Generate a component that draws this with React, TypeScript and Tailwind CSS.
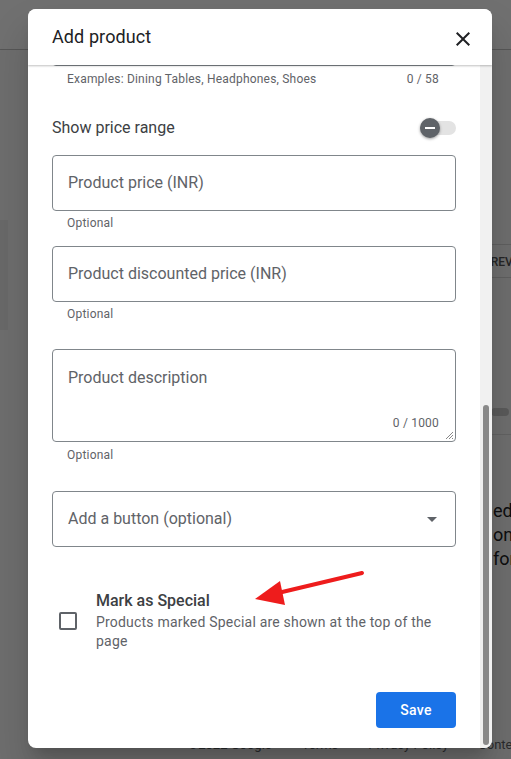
import React from 'react';

const font = { fontFamily: 'Roboto, "Liberation Sans", sans-serif' };

function OutlinedField({ label, className = '' }: { label: string; className?: string }) {
  return (
    <div className={`h-[56px] border border-[#80868b] rounded-[4px] flex items-center px-[15px] ${className}`}>
      <span className="text-[16px] text-[#5f6368]">{label}</span>
    </div>
  );
}

function Helper({ text, className = '' }: { text: string; className?: string }) {
  return <div className={`pl-[15px] text-[12px] leading-[16px] text-[#5f6368] tracking-[0.2px] ${className}`}>{text}</div>;
}

function BackgroundPage() {
  return (
    <div className="h-full bg-[#fafafa] flex flex-col">
      <div className="h-[50px] bg-white border-b border-[#c4c4c4] shrink-0" />
      <div className="flex-1 flex">
        <div className="w-[8px] mt-[170px] h-[110px] bg-[#f0f0f0]" />
        <div className="flex-1" />
        <div className="w-[40px] flex flex-col overflow-hidden">
          <div className="mt-[194px] border-t border-[#d8d8d8]" />
          <div className="pl-[12px] pt-[8px] pb-[6px] text-[12px] text-[#555] font-medium whitespace-nowrap">PREVIEW</div>
          <div className="border-t border-[#d8d8d8]" />
          <div className="mt-[130px] ml-[20px] h-[8px] w-[18px] rounded-full bg-[#ccc]" />
          <div className="mt-[18px] border-t border-[#e0e0e0]" />
          <div className="mt-[64px] pl-[22px] text-[18px] leading-[24px] text-[#202124] whitespace-nowrap">
            <div>ed</div>
            <div>ont</div>
            <div>for</div>
          </div>
        </div>
      </div>
      <div className="h-[24px] shrink-0 flex gap-[30px] pl-[188px] text-[13px] text-[#5f6368] whitespace-nowrap overflow-hidden">
        <span>©2022 Google</span>
        <span>Terms</span>
        <span>Privacy Policy</span>
        <span>Content Policy</span>
      </div>
    </div>
  );
}

export default function App() {
  return (
    <div className="relative w-[511px] h-[759px] overflow-hidden" style={font}>
      <BackgroundPage />
      <div className="absolute inset-0 bg-[rgba(0,0,0,0.56)]" />

      <div className="absolute left-[28px] top-[9px] w-[464px] h-[739px] bg-white rounded-[8px] shadow-[0_11px_15px_-7px_rgba(0,0,0,0.2),0_24px_38px_3px_rgba(0,0,0,0.14)] flex flex-col overflow-hidden">
        <div className="relative z-10 h-[56px] shrink-0 flex items-center justify-between pl-[24px] pr-[17px] bg-white shadow-[0_1px_2px_rgba(0,0,0,0.25)]">
          <span className="text-[18px] text-[#202124] tracking-[0.1px] -mt-[2px]">Add product</span>
          <svg width="24" height="24" viewBox="0 0 24 24" className="mt-[4px]">
            <path fill="#202124" d="M19 6.41L17.59 5 12 10.59 6.41 5 5 6.41 10.59 12 5 17.59 6.41 19 12 13.41 17.59 19 19 17.59 13.41 12z" />
          </svg>
        </div>

        <div className="flex-1 flex min-h-0">
          <div className="flex-1 overflow-hidden pl-[24px] pr-[24px]">
            {/* previous field, scrolled off */}
            <div className="-mt-[55px] h-[56px] border border-[#80868b] rounded-[4px]" />
            <div className="mt-[5px] flex justify-between pl-[15px] pr-[17px] text-[12px] leading-[16px] text-[#5f6368] tracking-[0.2px]">
              <span>Examples: Dining Tables, Headphones, Shoes</span>
              <span>0 / 58</span>
            </div>

            <div className="mt-[29px] flex items-center justify-between h-[24px]">
              <span className="text-[16px] text-[#3c4043]">Show price range</span>
              <div className="relative w-[36px] h-[14px] rounded-full bg-[#e3e3e3]">
                <div className="absolute left-0 -top-[3px] w-[20px] h-[20px] rounded-full bg-[#5f6368] shadow-[0_1px_3px_rgba(0,0,0,0.4)] flex items-center justify-center">
                  <div className="w-[10px] h-[2px] bg-white" />
                </div>
              </div>
            </div>

            <OutlinedField label="Product price (INR)" className="mt-[15px]" />
            <Helper text="Optional" className="mt-[4px]" />

            <OutlinedField label="Product discounted price (INR)" className="mt-[15px]" />
            <Helper text="Optional" className="mt-[4px]" />

            <div className="relative mt-[27px] h-[93px] border border-[#80868b] rounded-[4px] px-[15px] pt-[16px]">
              <span className="text-[16px] text-[#5f6368]">Product description</span>
              <span className="absolute right-[16px] bottom-[9px] text-[12px] text-[#5f6368] tracking-[0.2px]">0 / 1000</span>
              <svg width="9" height="9" viewBox="0 0 9 9" className="absolute right-[1px] bottom-[1px]">
                <path d="M8 1L1 8M8 4L4 8M8 7L7 8" stroke="#888" strokeWidth="1" />
              </svg>
            </div>
            <Helper text="Optional" className="mt-[5px]" />

            <div className="mt-[28px] h-[56px] border border-[#80868b] rounded-[4px] flex items-center justify-between pl-[15px] pr-[18px]">
              <span className="text-[16px] text-[#5f6368]">Add a button (optional)</span>
              <svg width="10" height="5" viewBox="0 0 10 5">
                <path d="M0 0L5 5L10 0z" fill="#5f6368" />
              </svg>
            </div>

            <div className="mt-[42px] flex items-center">
              <div className="ml-[7px] w-[18px] h-[18px] border-2 border-[#5f6368] rounded-[2px] mt-[2px] shrink-0" />
              <div className="ml-[19px]">
                <div className="text-[16px] leading-[24px] font-medium text-[#3c4043]">Mark as Special</div>
                <div className="text-[14px] leading-[19px] text-[#5f6368] tracking-[0.2px] pr-[14px]">
                  Products marked Special are shown at the top of the page
                </div>
              </div>
            </div>

            <div className="mt-[41px] flex justify-end">
              <button className="w-[80px] h-[36px] rounded-[4px] bg-[#1a73e8] text-white text-[14px] font-medium tracking-[0.25px]">
                Save
              </button>
            </div>
          </div>

          <div className="w-[12px] shrink-0 bg-[#f1f1f1] flex flex-col justify-end pb-[3px]">
            <div className="ml-[3px] w-[6px] h-[340px] rounded-full bg-[#8a8a8a]" />
          </div>
        </div>
      </div>

      {/* red annotation arrow */}
      <svg className="absolute left-0 top-0 pointer-events-none" width="511" height="759">
        <line x1="362" y1="573" x2="278" y2="593" stroke="#ee1c1c" strokeWidth="4" strokeLinecap="round" />
        <polygon points="255,599 280,581 285,605" fill="#ee1c1c" />
      </svg>
    </div>
  );
}
